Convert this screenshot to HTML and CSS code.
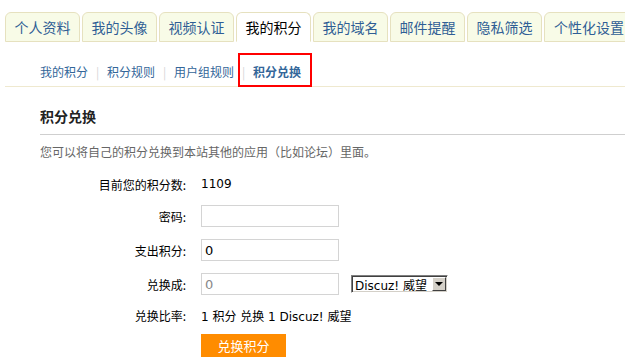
FILE: index.html
```html
<!DOCTYPE html>
<html lang="zh-CN">
<head>
    <meta charset="UTF-8">
    <title>积分兑换</title>
    <link rel="stylesheet" href="styles.css">
</head>
<body>
    <ul class="tabs">
        <li class="tab"><a href="#">个人资料</a></li>
        <li class="tab"><a href="#">我的头像</a></li>
        <li class="tab"><a href="#">视频认证</a></li>
        <li class="tab active"><a href="#">我的积分</a></li>
        <li class="tab"><a href="#">我的域名</a></li>
        <li class="tab"><a href="#">邮件提醒</a></li>
        <li class="tab"><a href="#">隐私筛选</a></li>
        <li class="tab wide"><a href="#">个性化设置</a></li>
    </ul>

    <div class="subnav">
        <a href="#">我的积分</a>
        <span class="sep">|</span>
        <a href="#">积分规则</a>
        <span class="sep">|</span>
        <a href="#">用户组规则</a>
        <span class="sep">|</span>
        <a href="#" class="current">积分兑换</a>
        <div class="highlight"></div>
    </div>

    <div class="content">
        <h2 class="title">积分兑换</h2>
        <p class="desc">您可以将自己的积分兑换到本站其他的应用（比如论坛）里面。</p>

        <div class="form">
            <div class="row first">
                <label>目前您的积分数:</label>
                <span class="value">1109</span>
            </div>
            <div class="row">
                <label>密码:</label>
                <input type="password" class="text">
            </div>
            <div class="row">
                <label>支出积分:</label>
                <input type="text" class="text" value="0">
            </div>
            <div class="row">
                <label>兑换成:</label>
                <input type="text" class="text" value="0" disabled>
                <div class="select">
                    <span class="select-text">Discuz! 威望</span>
                    <span class="select-btn"><span class="arrow"></span></span>
                </div>
            </div>
            <div class="row rate">
                <label>兑换比率:</label>
                <span class="value">1 积分 兑换 1 Discuz! 威望</span>
            </div>
            <div class="row submit">
                <button class="btn">兑换积分</button>
            </div>
        </div>
    </div>
</body>
</html>
```

FILE: styles.css
```css
body {
    margin: 0;
    font-family: "DejaVu Sans", "Noto Sans CJK SC", sans-serif;
    font-size: 12px;
    color: #000;
    background: #fff;
    overflow: hidden;
}

a {
    text-decoration: none;
}

/* top tabs */
.tabs {
    display: flex;
    gap: 2px;
    margin: 12px 0 0;
    padding: 0 0 0 5px;
    list-style: none;
    white-space: nowrap;
}

.tab {
    flex: none;
    width: 75px;
    height: 30px;
    box-sizing: border-box;
    border: 1px solid #e6e1bf;
    border-radius: 6px 6px 0 0;
    background: #f8fbe7;
    text-align: center;
}

.tab.wide {
    width: auto;
    padding: 0 9px;
}

.tab a {
    display: block;
    line-height: 28px;
    font-family: "Noto Sans CJK SC", sans-serif;
    font-size: 14px;
    color: #2f5e95;
}

.tab.active {
    background: #fff;
    border-bottom-color: #fff;
}

.tab.active a {
    color: #000;
}

/* sub navigation */
.subnav {
    position: relative;
    display: flex;
    align-items: center;
    margin-left: 5px;
    padding: 22px 0 6px 35px;
    line-height: 16px;
    border-bottom: 1px solid #efe9cf;
    font-family: "Noto Sans CJK SC", sans-serif;
}

.subnav a {
    flex: none;
    color: #336699;
}

.subnav a.current {
    font-weight: bold;
}

.subnav .sep {
    flex: none;
    width: 5px;
    margin: 0 7px;
    text-align: center;
    color: #d6d6d6;
}

.highlight {
    position: absolute;
    left: 233px;
    top: 11px;
    width: 74px;
    height: 34px;
    box-sizing: border-box;
    border: 2px solid #f00;
}

/* content */
.content {
    padding-left: 40px;
    font-family: "Noto Sans CJK SC", sans-serif;
}

.title {
    margin: 0;
    padding: 19px 0 8px;
    font-size: 14px;
    line-height: 20px;
    color: #222;
    border-bottom: 1px solid #cfcfcf;
}

.desc {
    margin: 9px 0 0;
    line-height: 16px;
    color: #666;
}

.form {
    margin-top: 13px;
}

.row {
    display: flex;
    align-items: center;
    height: 22px;
    margin-bottom: 12px;
}

.row.first {
    margin-bottom: 10px;
}

.row label {
    width: 146px;
    flex: none;
    text-align: right;
    margin-right: 15px;
    color: #000;
}

.row .value {
    font-family: "DejaVu Sans", "Noto Sans CJK SC", sans-serif;
}

.row.rate {
    height: 16px;
    margin-bottom: 11px;
}

.row.submit {
    height: 23px;
    padding-left: 161px;
}

.text {
    width: 138px;
    height: 22px;
    box-sizing: border-box;
    margin: 0;
    padding: 0 3px;
    border: 1px solid #d4d4d4;
    font-family: "DejaVu Sans", sans-serif;
    font-size: 13px;
    color: #000;
    background: #fff;
}

.text:disabled {
    color: #888;
}

.select {
    display: flex;
    align-items: center;
    margin-left: 12px;
    width: 97px;
    height: 18px;
    box-sizing: border-box;
    border: 1px solid;
    border-color: #808080 #fff #fff #808080;
    box-shadow: inset 1px 1px 0 #404040, inset -1px -1px 0 #d4d0c8;
    background: #fff;
    font-family: "DejaVu Sans", "Noto Sans CJK SC", sans-serif;
    font-size: 12px;
}

.select-text {
    flex: 1;
    padding-left: 3px;
    white-space: nowrap;
    overflow: hidden;
}

.select-btn {
    display: flex;
    align-items: center;
    justify-content: center;
    width: 14px;
    height: 14px;
    margin-right: 1px;
    box-sizing: border-box;
    background: #d4d0c8;
    border: 1px solid;
    border-color: #fff #404040 #404040 #fff;
}

.arrow {
    width: 0;
    height: 0;
    border-left: 4px solid transparent;
    border-right: 4px solid transparent;
    border-top: 4px solid #000;
}

.btn {
    width: 85px;
    height: 23px;
    border: none;
    padding: 0;
    background: #ff8c00;
    color: #fff;
    font-family: "Noto Sans CJK SC", sans-serif;
    font-size: 13px;
    cursor: pointer;
}
```
